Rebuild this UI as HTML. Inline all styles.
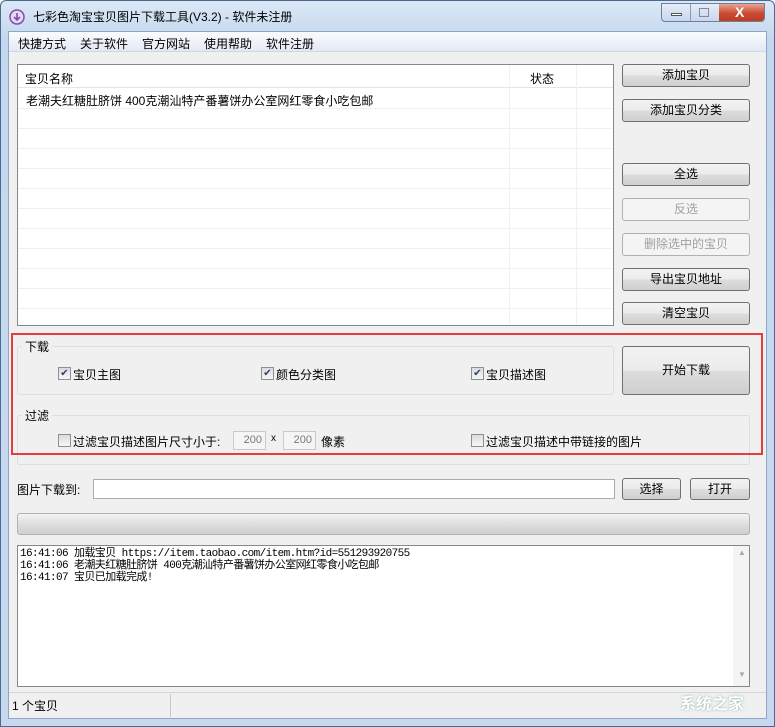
<!DOCTYPE html>
<html><head><meta charset="utf-8"><style>
*{box-sizing:border-box;margin:0;padding:0}
body{width:775px;height:727px;position:relative;overflow:hidden;background:#fff;font-family:"Liberation Sans","Noto Sans CJK SC",sans-serif;font-size:12px;color:#000}
.a{position:absolute}
.frame{left:0;top:0;width:775px;height:727px;border:1px solid #4b6a8e;border-radius:6px 6px 0 0;background:linear-gradient(#dbe8f6,#c3d7ee 40px,#c6d9ef)}
.client{left:8px;top:31px;width:759px;height:688px;background:#f0f0f0;border:1px solid #8ea6c4}
.btn{position:absolute;border:1px solid #707070;border-radius:3px;background:linear-gradient(#f2f2f2,#ebebeb 50%,#dddddd 51%,#cfcfcf);text-align:center;font-size:12px;line-height:20px}
.dis{border-color:#adb2b5;background:#f4f4f4;color:#a0a0a0}
.grp{position:absolute;border:1px solid #d5dfe5;border-radius:3px}
.lbl{position:absolute;background:#f0f0f0;padding:0 3px}
.cb{position:absolute;width:13px;height:13px;border:1px solid #8f8f8f;background:linear-gradient(#dcdcdc,#f6f6f6);font-size:10px;line-height:11px;text-align:center;color:#2a3f7a}
.row{position:absolute;left:0;width:594px;height:1px;background:#eef0f3}
</style></head><body>
<div class="a frame"></div>
<svg class="a" style="left:9px;top:9px" width="16" height="16"><circle cx="8" cy="8" r="7" fill="#e8d9f3" stroke="#7b4fa8" stroke-width="1.5"/><path d="M8 4v7M5 8l3 3 3-3" stroke="#7b4fa8" stroke-width="1.6" fill="none"/></svg>
<div class="a" style="left:33px;top:8px;font-size:12px">七彩色淘宝宝贝图片下载工具(V3.2) - 软件未注册</div>
<div class="a" style="left:661px;top:3px;width:104px;height:19px;border:1px solid #6d7f98;border-radius:0 0 4px 4px;overflow:hidden;background:linear-gradient(#e4edf8,#c7d7ec)">
<div class="a" style="left:28px;top:0;width:1px;height:19px;background:#8a9bb3"></div>
<div class="a" style="left:57px;top:0;width:46px;height:19px;background:linear-gradient(#e8a493,#c94a32 50%,#c0351f)"></div>
<div class="a" style="left:9px;top:9px;width:11px;height:3px;background:#fff;border:1px solid #555"></div>
<div class="a" style="left:37px;top:4px;width:10px;height:9px;border:1px solid #889;"></div>
<div class="a" style="left:73px;top:0px;color:#fff;font-weight:bold;font-size:14px">X</div>
</div>
<div class="a client"></div>
<div class="a" style="left:9px;top:32px;width:757px;height:20px;background:linear-gradient(#fafbfd,#e3e9f4);border-bottom:1px solid #d0d7e3"></div>
<div class="a" style="left:18px;top:35px;word-spacing:0">快捷方式</div>
<div class="a" style="left:80px;top:35px">关于软件</div>
<div class="a" style="left:142px;top:35px">官方网站</div>
<div class="a" style="left:204px;top:35px">使用帮助</div>
<div class="a" style="left:266px;top:35px">软件注册</div>

<div class="a" style="left:17px;top:64px;width:597px;height:262px;border:1px solid #828790;background:#fff;overflow:hidden">
<div class="a" style="left:0;top:0;width:595px;height:23px;border-bottom:1px solid #e5e5e5"></div>
<div class="a" style="left:491px;top:0;width:1px;height:262px;background:#eef0f3"></div>
<div class="a" style="left:558px;top:0;width:1px;height:262px;background:#eef0f3"></div>
<div class="a" style="left:7px;top:5px">宝贝名称</div>
<div class="a" style="left:512px;top:5px">状态</div>
<div class="a" style="left:8px;top:27px">老潮夫红糖肚脐饼 400克潮汕特产番薯饼办公室网红零食小吃包邮</div>
<div class="row" style="top:43px"></div><div class="row" style="top:63px"></div><div class="row" style="top:83px"></div><div class="row" style="top:103px"></div><div class="row" style="top:123px"></div><div class="row" style="top:143px"></div><div class="row" style="top:163px"></div><div class="row" style="top:183px"></div><div class="row" style="top:203px"></div><div class="row" style="top:223px"></div><div class="row" style="top:243px"></div>
</div>

<div class="btn" style="left:622px;top:64px;width:128px;height:23px">添加宝贝</div>
<div class="btn" style="left:622px;top:99px;width:128px;height:23px">添加宝贝分类</div>
<div class="btn" style="left:622px;top:163px;width:128px;height:23px">全选</div>
<div class="btn dis" style="left:622px;top:198px;width:128px;height:23px">反选</div>
<div class="btn dis" style="left:622px;top:233px;width:128px;height:23px">删除选中的宝贝</div>
<div class="btn" style="left:622px;top:268px;width:128px;height:23px">导出宝贝地址</div>
<div class="btn" style="left:622px;top:302px;width:128px;height:23px">清空宝贝</div>

<div class="grp" style="left:17px;top:346px;width:597px;height:49px"></div>
<div class="lbl" style="left:22px;top:338px">下载</div>
<div class="cb" style="left:58px;top:367px">✔</div><div class="a" style="left:73px;top:366px">宝贝主图</div>
<div class="cb" style="left:261px;top:367px">✔</div><div class="a" style="left:276px;top:366px">颜色分类图</div>
<div class="cb" style="left:471px;top:367px">✔</div><div class="a" style="left:486px;top:366px">宝贝描述图</div>
<div class="btn" style="left:622px;top:346px;width:128px;height:49px;line-height:46px">开始下载</div>

<div class="grp" style="left:17px;top:415px;width:733px;height:50px"></div>
<div class="lbl" style="left:22px;top:407px">过滤</div>
<div class="cb" style="left:58px;top:434px"></div><div class="a" style="left:73px;top:433px">过滤宝贝描述图片尺寸小于:</div>
<div class="a" style="left:233px;top:431px;width:33px;height:19px;border:1px solid #c9c9c9;background:#f5f5f5;color:#777;font-size:11px;text-align:right;padding:2px 3px">200</div>
<div class="a" style="left:271px;top:433px;font-size:10px">x</div>
<div class="a" style="left:283px;top:431px;width:33px;height:19px;border:1px solid #c9c9c9;background:#f5f5f5;color:#777;font-size:11px;text-align:right;padding:2px 3px">200</div>
<div class="a" style="left:321px;top:433px">像素</div>
<div class="cb" style="left:471px;top:434px"></div><div class="a" style="left:486px;top:433px">过滤宝贝描述中带链接的图片</div>

<div class="a" style="left:11px;top:333px;width:752px;height:122px;border:2px solid #e33d3d"></div>

<div class="a" style="left:17px;top:481px">图片下载到:</div>
<div class="a" style="left:93px;top:479px;width:522px;height:20px;border:1px solid #abadb3;background:#fff"></div>
<div class="btn" style="left:622px;top:478px;width:59px;height:22px">选择</div>
<div class="btn" style="left:690px;top:478px;width:60px;height:22px">打开</div>

<div class="a" style="left:17px;top:513px;width:733px;height:22px;border:1px solid #b2b2b2;border-radius:3px;background:linear-gradient(#f3f3f3,#dedede 50%,#cfcfcf)"></div>

<div class="a" style="left:17px;top:545px;width:733px;height:142px;border:1px solid #828790;background:#fff"></div>
<div class="a" style="left:733px;top:546px;width:16px;height:140px;background:#f4f4f4"></div>
<div class="a" style="left:738px;top:548px;color:#aaa;font-size:8px">▲</div>
<div class="a" style="left:738px;top:670px;color:#aaa;font-size:8px">▼</div>
<div class="a" style="left:20px;top:548px;font-family:'Liberation Mono','Noto Sans CJK SC',monospace;font-size:11px;line-height:12px;letter-spacing:-0.6px">16:41:06 加载宝贝 https://item.taobao.com/item.htm?id=551293920755<br>16:41:06 老潮夫红糖肚脐饼 400克潮汕特产番薯饼办公室网红零食小吃包邮<br>16:41:07 宝贝已加载完成!</div>

<div class="a" style="left:9px;top:692px;width:757px;height:26px;background:#f0f0f0;border-top:1px solid #d6d6d6"></div>
<div class="a" style="left:170px;top:694px;width:1px;height:23px;background:#c8c8c8"></div>
<div class="a" style="left:12px;top:697px">1 个宝贝</div>
<div class="a" style="left:680px;top:690px;color:#fff;font-size:16px;font-weight:bold;text-shadow:0 0 2px #8aa">系统之家</div>
</body></html>
